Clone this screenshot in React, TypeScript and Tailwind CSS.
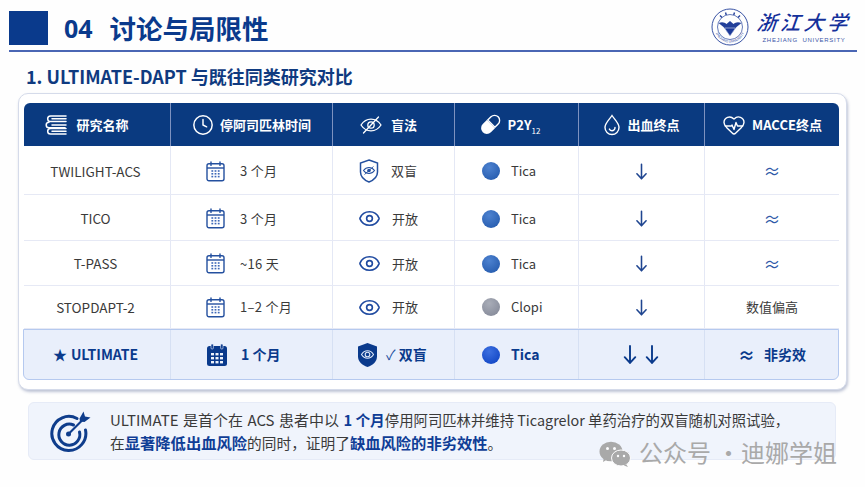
import React from "react";
import { Clock, Eye, HeartPulse } from "lucide-react";

const font = { fontFamily: '"Noto Sans CJK SC", "Noto Sans", sans-serif' };

function Books() {
  return (
    <svg width="23" height="22" viewBox="0 0 23 22" fill="none" stroke="white" strokeWidth="1.5" strokeLinecap="round">
      <path d="M21 2H5.500a2.600 2.600 0 0 0 0 5.600H21" />
      <path d="M7 4.800h14" />
      <path d="M4 8.200a2.700 2.700 0 0 0 0 5.600H20" />
      <path d="M7 11h14" />
      <path d="M21 14.400H5.500a2.600 2.600 0 0 0 0 5.600H21" />
      <path d="M7 17.200h14" />
    </svg>
  );
}

function Pill() {
  return (
    <svg width="23" height="23" viewBox="0 0 20 20">
      <g transform="rotate(-45 10 10)">
        <path d="M10 5H5a5 5 0 0 0 0 10h5z" fill="white" transform="translate(0.500 0)" />
        <path d="M11 5.600h4a4.400 4.400 0 0 1 0 8.800h-4z" fill="none" stroke="white" strokeWidth="1.200" />
      </g>
    </svg>
  );
}

function Drop() {
  return (
    <svg width="18" height="22" viewBox="0 0 18 22" fill="none" stroke="white" strokeWidth="1.400" strokeLinecap="round">
      <path d="M9 1.500C6.500 5.500 2 9 2 13.500a7 7 0 0 0 14 0C16 9 11.500 5.500 9 1.500z" />
      <path d="M12 13.500a3 3 0 0 1-3 3.200 3 3 0 0 1-2.600-1.600" />
    </svg>
  );
}

function SlashedEye() {
  return (
    <svg width="22" height="18" viewBox="0 0 22 18" fill="none" stroke="white" strokeWidth="1.300" strokeLinecap="round">
      <path d="M1 9c2.500-3.800 6-5.800 10-5.800S18.500 5.200 21 9c-2.500 3.800-6 5.800-10 5.800S3.500 12.800 1 9z" />
      <circle cx="11" cy="9" r="3.200" />
      <path d="M3.500 17L18.500 1" />
    </svg>
  );
}

function Calendar({ solid }: { solid?: boolean }) {
  if (solid) {
    return (
      <svg width="22" height="24" viewBox="0 0 22 24">
        <rect x="1" y="3" width="20" height="20" rx="2.500" fill="#0a3a8c" />
        <rect x="5" y="1" width="2.400" height="5" rx="1" fill="#0a3a8c" stroke="#e9effb" strokeWidth="0.600" />
        <rect x="14.600" y="1" width="2.400" height="5" rx="1" fill="#0a3a8c" stroke="#e9effb" strokeWidth="0.600" />
        <g fill="#eef3fc">
          {[10, 14, 18].map((y) =>
            [5, 9.500, 14].map((x) => <rect key={`${x}-${y}`} x={x} y={y} width="3" height="2.400" />)
          )}
        </g>
      </svg>
    );
  }
  return (
    <svg width="19" height="21" viewBox="0 0 19 21" fill="none">
      <rect x="1" y="2.800" width="17" height="17" rx="2" stroke="#24509f" strokeWidth="1.400" />
      <path d="M1 7h17" stroke="#24509f" strokeWidth="1.400" />
      <path d="M5 1v3.400M14 1v3.400" stroke="#24509f" strokeWidth="1.400" strokeLinecap="round" />
      <g fill="#3f69b8">
        {[9.200, 12, 14.800].map((y) =>
          [5.400, 8.600, 11.800].map((x) => <rect key={`${x}-${y}`} x={x} y={y} width="1.800" height="1.600" />)
        )}
      </g>
    </svg>
  );
}

function ShieldEye({ solid }: { solid?: boolean }) {
  if (solid) {
    return (
      <svg width="21" height="26" viewBox="0 0 21 26">
        <path d="M10.500 1L20 4.500v10c0 5-4 8.700-9.500 10.500C5 23.200 1 19.500 1 14.500v-10z" fill="#0a3a8c" />
        <path d="M4.500 12.500C6 10 8 8.800 10.500 8.800S15 10 16.500 12.500C15 15 13 16.200 10.500 16.200S6 15 4.500 12.500z" fill="none" stroke="#dfe8f8" strokeWidth="1.100" />
        <circle cx="10.500" cy="12.500" r="2.300" fill="none" stroke="#dfe8f8" strokeWidth="1.100" />
      </svg>
    );
  }
  return (
    <svg width="20" height="24" viewBox="0 0 20 24" fill="none">
      <path d="M10 1l8.500 3v9c0 4.500-3.500 8-8.500 10C5 21 1.500 17.500 1.500 13V4z" stroke="#24509f" strokeWidth="1.500" />
      <path d="M4.500 11.500C6 9.500 8 8.500 10 8.500s4 1 5.500 3c-1.500 2-3.500 3-5.500 3s-4-1-5.500-3z" stroke="#24509f" strokeWidth="1.100" />
      <circle cx="10" cy="11.500" r="1.800" fill="#24509f" />
      <path d="M5.500 15.500l9-8" stroke="#24509f" strokeWidth="0.900" />
    </svg>
  );
}

function Ball({ gray, strong }: { gray?: boolean; strong?: boolean }) {
  const cls = gray
    ? "bg-[radial-gradient(circle_at_40%_30%,#a9adb8,#7f8494)]"
    : strong
      ? "bg-[radial-gradient(circle_at_40%_30%,#3c6fe0,#0a3fc0)]"
      : "bg-[radial-gradient(circle_at_40%_30%,#4d82d0,#1f55a8)]";
  return <span className={`w-[18px] h-[18px] rounded-full shrink-0 ${cls}`} />;
}

function ArrowDown({ w = 11, h = 17, sw = 1.700, color = "#1f4590" }: { w?: number; h?: number; sw?: number; color?: string }) {
  return (
    <svg width={w} height={h} viewBox="0 0 12 18" fill="none" stroke={color} strokeWidth={sw} strokeLinecap="round" strokeLinejoin="round">
      <path d="M6 1v16M1 11.500L6 17l5-5.500" />
    </svg>
  );
}

function Target() {
  return (
    <svg width="42" height="42" viewBox="0 0 42 42" fill="none" stroke="#0f3d8c" strokeLinecap="round">
      <path d="M27 8.500A17 17 0 1 0 35.500 20" strokeWidth="3" />
      <path d="M23.500 15A10.500 10.500 0 1 0 29.500 22" strokeWidth="3" />
      <circle cx="18.500" cy="24" r="2.500" fill="#0f3d8c" stroke="none" />
      <path d="M18.500 24L33 9.500" strokeWidth="2.200" />
      <path d="M29.500 8.500L33.500 1.500l1.500 5 5.500 1-6 4.500-4.500-.5z" fill="#0f3d8c" stroke="none" />
    </svg>
  );
}

function Wechat() {
  return (
    <svg width="32" height="26" viewBox="0 0 32 26">
      <ellipse cx="12" cy="10.500" rx="11.500" ry="9.800" fill="#a9a9a9" />
      <path d="M5 16l-1 5 5-3z" fill="#a9a9a9" />
      <ellipse cx="22" cy="17" rx="9.500" ry="8" fill="#a9a9a9" stroke="#fdfdfe" strokeWidth="1" />
      <path d="M27 23l2 3-4-1.500z" fill="#a9a9a9" />
      <circle cx="8.500" cy="7.500" r="1.500" fill="#fdfdfe" />
      <circle cx="15.500" cy="7.500" r="1.500" fill="#fdfdfe" />
      <circle cx="19" cy="15" r="1.200" fill="#fdfdfe" />
      <circle cx="25" cy="15" r="1.200" fill="#fdfdfe" />
    </svg>
  );
}

function Logo() {
  return (
    <div className="flex items-center gap-[8px]">
      <svg width="38" height="38" viewBox="0 0 38 38" fill="none" className="mt-[1px]">
        <circle cx="19" cy="19" r="18" stroke="#23409a" strokeWidth="0.900" />
        <circle cx="19" cy="19" r="12.500" stroke="#23409a" strokeWidth="0.700" />
        <path d="M7.500 15c4-1.500 6-.5 8 1l3.500-3 3.500 3c2-1.500 4-2.500 8-1l-5 4-6.500 9-6.500-9z" fill="#23409a" />
        <path d="M13.500 20h11L19 28z" fill="#1c3a9a" stroke="white" strokeWidth="0.500" />
        <path d="M9 7.500l2 2M14.500 4.500l.8 2.500M23.500 4.500l-.8 2.500M29 7.500l-2 2" stroke="#23409a" strokeWidth="1.400" />
        <defs><path id="ring" d="M3.800 21a15.300 15.300 0 0 0 30.400 0" /></defs>
        <text fontSize="3.200" fill="#23409a" fontFamily="Liberation Sans" textAnchor="middle"><textPath href="#ring" startOffset="50%">ZHEJIANG UNIVERSITY</textPath></text>
      </svg>
      <div className="flex flex-col items-center -mt-[1px]">
        <span className="text-[20px] leading-[26px] font-medium italic text-[#14309a] tracking-[3.500px] -skew-x-6">浙江大学</span>
        <span className="text-[6px] leading-[8px] mt-[1px] text-[#3a55a8] tracking-[0.700px] font-['Liberation_Sans']">ZHEJIANG&nbsp; UNIVERSITY</span>
      </div>
    </div>
  );
}

const cols = "grid grid-cols-[147px_162px_122px_124px_126px_134px]";
const cell = "flex items-center border-r border-[#e4e8f5] last:border-r-0";
const hCell = "flex items-center justify-center gap-[6px] border-r border-[#7d92c0] last:border-r-0 text-white text-[13px] font-bold";

type Row = {
  name: string; h: string; pad: string; time: string; blind: "shield" | "eye"; blindText: string;
  drug: string; gray?: boolean; end: string;
};
const rows: Row[] = [
  { name: "TWILIGHT-ACS", h: "h-[49px]", pad: "[&>div]:pt-[2px]", time: "3 个月", blind: "shield", blindText: "双盲", drug: "Tica", end: "≈" },
  { name: "TICO", h: "h-[46px]", pad: "[&>div]:pt-[2px]", time: "3 个月", blind: "eye", blindText: "开放", drug: "Tica", end: "≈" },
  { name: "T-PASS", h: "h-[45px]", pad: "[&>div]:pt-[1px]", time: "~16 天", blind: "eye", blindText: "开放", drug: "Tica", end: "≈" },
  { name: "STOPDAPT-2", h: "h-[43px]", pad: "", time: "1–2 个月", blind: "eye", blindText: "开放", drug: "Clopi", gray: true, end: "数值偏高" },
];

export default function App() {
  return (
    <div style={font} className="relative w-[865px] h-[487px] overflow-hidden bg-[#fefefe]">
      <header className="h-[52px] mx-[9px] w-[848px] border-b-2 border-[#4a66b4] flex items-start">
        <div className="w-[39px] h-[34px] mt-[11px] bg-[#0a3a8c]" />
        <div className="ml-[16px] mt-[9px] flex items-center gap-[17px] text-[#0a3a8c] font-bold text-[26.500px] leading-[38px]">
          <span className="font-['Noto_Sans'] text-[25px]">04</span>
          <span>讨论与局限性</span>
        </div>
        <div className="ml-auto mt-[7px] mr-[6px]"><Logo /></div>
      </header>

      <h2 className="ml-[26px] mt-[12px] h-[24px] text-[18px] leading-[24px] font-bold text-[#0f3a80]">1. ULTIMATE-DAPT 与既往同类研究对比</h2>

      <section className="ml-[18px] mt-[5px] w-[829px] h-[297px] rounded-[10px] border border-[#d5dbea] bg-white shadow-[1px_2px_3px_rgba(110,125,165,0.45)] pl-[5px] pt-[9px]">
        <div className="w-[815px] rounded-[6px]">
          <div className={`${cols} h-[43px] bg-[#0a3a80] rounded-t-[6px]`}>
            <div className={`${hCell} pr-[20px] gap-[8px]`}><Books />研究名称</div>
            <div className={hCell}><Clock size={22} strokeWidth={1.600} />停阿司匹林时间</div>
            <div className={`${hCell} pr-[10px] gap-[9px]`}><SlashedEye />盲法</div>
            <div className={`${hCell} pr-[14px] gap-[4px]`}><Pill /><span>P2Y<sub className="text-[8px] font-normal align-[-2px]">12</sub></span></div>
            <div className={hCell}><Drop />出血终点</div>
            <div className={hCell}><HeartPulse size={24} strokeWidth={1.400} />MACCE终点</div>
          </div>
          {rows.map((r) => (
            <div key={r.name} className={`${cols} ${r.h} ${r.pad} border-b border-[#e6e9f5] text-[13px] text-[#3a3a3a]`}>
              <div className={`${cell} justify-center text-[13.500px] pr-[3px]`}>{r.name}</div>
              <div className={`${cell} pl-[35px] gap-[15px]`}><Calendar /><span className="tracking-[0.300px]">{r.time}</span></div>
              <div className={`${cell} pl-[25px] gap-[11px]`}>
                {r.blind === "shield" ? <span className="w-[22px] flex justify-center"><ShieldEye /></span> : <Eye size={23} strokeWidth={1.700} color="#1f4aa0" />}
                <span>{r.blindText}</span>
              </div>
              <div className={`${cell} pl-[27px] gap-[11px]`}><Ball gray={r.gray} /><span>{r.drug}</span></div>
              <div className={`${cell} justify-center`}><ArrowDown /></div>
              <div className={`${cell} justify-center`}><span className={r.end === "≈" ? "text-[17px] text-[#2f5aa8]" : ""}>{r.end}</span></div>
            </div>
          ))}
          <div className={`${cols} h-[51px] bg-[#e9effb] border border-[#b5c9ef] rounded-b-[6px] -ml-px w-[816px] text-[#0a3a8c] font-bold text-[14px]`}>
            <div className="flex items-center justify-center border-r border-[#d6e0f3] gap-[4px] pr-[3px]"><span>★</span><span>ULTIMATE</span></div>
            <div className="flex items-center border-r border-[#d6e0f3] pl-[35px] gap-[13px]"><Calendar solid /><span>1 个月</span></div>
            <div className="flex items-center border-r border-[#d6e0f3] pl-[24px] gap-[8px]"><ShieldEye solid /><span><span className="font-normal text-[#24509f]">✓</span> 双盲</span></div>
            <div className="flex items-center border-r border-[#d6e0f3] pl-[27px] gap-[11px]"><Ball strong /><span>Tica</span></div>
            <div className="flex items-center justify-center border-r border-[#d6e0f3] gap-[8px] pr-[2px]"><ArrowDown w={14} h={19} sw={1.800} color="#0a3a8c" /><ArrowDown w={14} h={19} sw={1.800} color="#0a3a8c" /></div>
            <div className="flex items-center justify-center gap-[9px]"><span className="text-[17px]">≈</span><span>非劣效</span></div>
          </div>
        </div>
      </section>

      <section className="ml-[28px] mt-[12px] w-[808px] h-[58px] rounded-[6px] bg-[#f0f4fc] border border-[#e6ebf7] flex items-center pl-[21px]">
        <Target />
        <p className="ml-[18px] text-[14.700px] leading-[23px] text-[#3a3a3a] whitespace-nowrap">
          <span className="text-[15px] [word-spacing:1.100px]">ULTIMATE 是首个在 ACS 患者中以 </span><b className="text-[#0f3d96]">1 个月</b><span className="text-[14.370px]">停用阿司匹林并维持 Ticagrelor 单药治疗的双盲随机对照试验，</span><br />
          在<b className="text-[15.300px] text-[#0f3d96]">显著降低出血风险</b>的同时，证明了<b className="text-[15.300px] text-[#0f3d96]">缺血风险的非劣效性</b>。
        </p>
      </section>

      <div className="absolute left-[599px] top-[437px] flex items-center h-[30px] text-[#a9a9a9] text-[24px] leading-[30px]">
        <span className="mt-[4px]"><Wechat /></span>
        <span className="ml-[8px]">公众号</span>
        <span className="ml-[5px] w-[25px] text-center">·</span>
        <span>迪娜学姐</span>
      </div>
    </div>
  );
}
